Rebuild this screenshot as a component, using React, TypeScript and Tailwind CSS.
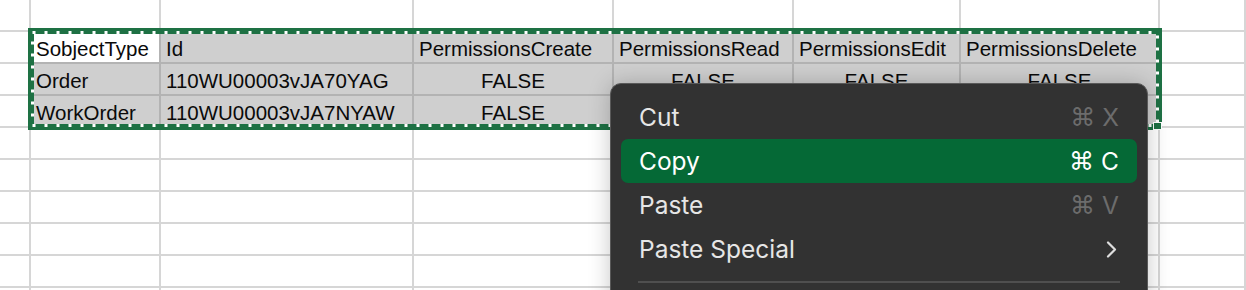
import React from 'react';

type Cell = { text?: string; center?: boolean };

const header: Cell[] = [
  { text: 'SobjectType' },
  { text: 'Id' },
  { text: 'PermissionsCreate' },
  { text: 'PermissionsRead' },
  { text: 'PermissionsEdit' },
  { text: 'PermissionsDelete' },
];

const dataRows: Cell[][] = [
  [
    { text: 'Order' },
    { text: '110WU00003vJA70YAG' },
    { text: 'FALSE', center: true },
    { text: 'FALSE', center: true },
    { text: 'FALSE', center: true },
    { text: 'FALSE', center: true },
  ],
  [
    { text: 'WorkOrder' },
    { text: '110WU00003vJA7NYAW' },
    { text: 'FALSE', center: true },
    { text: 'FALSE', center: true },
    { text: 'FALSE', center: true },
    { text: 'FALSE', center: true },
  ],
];

const TOTAL_ROWS = 10;
const TOTAL_COLS = 8;

function GridCell({ cell, selected, active }: { cell?: Cell; selected: boolean; active: boolean }) {
  const tone = active
    ? 'bg-white border-[#b3b3b3]'
    : selected
      ? 'bg-[#cfcfcf] border-[#b3b3b3]'
      : 'bg-white border-[#d6d6d6]';
  return (
    <div
      className={`${tone} border-r-2 border-b-2 overflow-hidden whitespace-nowrap px-[5px] pt-[3px] leading-[27px] text-[20.5px] text-[#0a0a0a] ${
        cell?.center ? 'text-center' : 'text-left'
      }`}
    >
      {cell?.text ?? ''}
    </div>
  );
}

function Sheet() {
  const cells: React.ReactNode[] = [];
  for (let r = 0; r < TOTAL_ROWS; r++) {
    for (let c = 0; c < TOTAL_COLS; c++) {
      const inSel = r >= 1 && r <= 3 && c >= 1 && c <= 6;
      let cell: Cell | undefined;
      if (inSel) cell = r === 1 ? header[c - 1] : dataRows[r - 2][c - 1];
      cells.push(
        <GridCell key={`${r}-${c}`} cell={cell} selected={inSel} active={r === 1 && c === 1} />
      );
    }
  }
  return (
    <div className="grid grid-cols-[31px_130px_253px_200px_180px_167px_199px_1fr] auto-rows-[32px]">
      {cells}
    </div>
  );
}

function CopyMarquee() {
  return (
    <>
      <svg className="absolute left-[28px] top-[28px]" width="1134" height="102" viewBox="0 0 1134 102">
        <rect x="3" y="3" width="1128" height="96" fill="none" stroke="#1e7144" strokeWidth="6" />
        <rect
          x="4.5"
          y="4.5"
          width="1125"
          height="93"
          fill="none"
          stroke="#ffffff"
          strokeWidth="3"
          strokeDasharray="3 9"
        />
      </svg>
      {/* fill handle */}
      <div className="absolute left-[1153px] top-[122px] w-[9px] h-[8px] bg-[#1e7144] border border-white" />
    </>
  );
}

function Shortcut({ k, dim, white }: { k: string; dim?: boolean; white?: boolean }) {
  const color = white ? 'text-white' : dim ? 'text-[#6c6c6c]' : 'text-[#e4e4e4]';
  return (
    <span className={`flex items-center gap-[7px] ${color}`}>
      <span className="text-[25px] leading-none font-['DejaVu_Sans',sans-serif]">⌘</span>
      <span>{k}</span>
    </span>
  );
}

function ContextMenu() {
  return (
    <div className="absolute left-[610px] top-[83px] w-[538px] h-[240px] rounded-[11px] bg-[#323232] border border-[#595959] shadow-[0_0_22px_rgba(0,0,0,0.22)] pt-[11px] px-[10px] font-['Inter',sans-serif] text-[24.5px] text-[#e6e6e6]">
      <div className="h-[44px] px-[18px] flex items-center justify-between rounded-[7px]">
        <span>Cut</span>
        <Shortcut k="X" dim />
      </div>
      <div className="h-[44px] px-[18px] flex items-center justify-between rounded-[7px] bg-[#056936] text-white">
        <span>Copy</span>
        <Shortcut k="C" white />
      </div>
      <div className="h-[44px] px-[18px] flex items-center justify-between rounded-[7px]">
        <span>Paste</span>
        <Shortcut k="V" dim />
      </div>
      <div className="h-[44px] pl-[18px] pr-[20px] flex items-center justify-between rounded-[7px]">
        <span>Paste Special</span>
        <svg width="11" height="17" viewBox="0 0 11 17">
          <path d="M2 1.5 L9 8.5 L2 15.5" fill="none" stroke="#dedede" strokeWidth="2.2" strokeLinecap="round" strokeLinejoin="round" />
        </svg>
      </div>
      <div className="mx-[17px] mt-[10px] h-[2px] bg-[#4f4f4f]" />
    </div>
  );
}

export default function App() {
  return (
    <div className="relative w-[1246px] h-[290px] overflow-hidden bg-white font-['Liberation_Sans',Arial,sans-serif]">
      <Sheet />
      <CopyMarquee />
      <ContextMenu />
    </div>
  );
}
